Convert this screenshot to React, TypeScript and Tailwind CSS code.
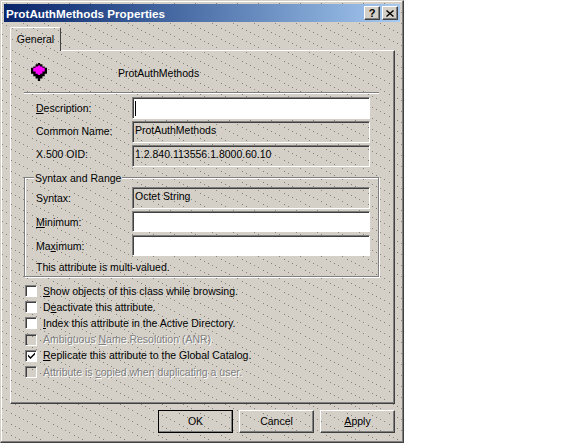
import React from 'react';

// dither: short diagonal runs of single grey pixels, same tile so they line up
const dots = "bg-[#d4d0c8] bg-[radial-gradient(circle,#7f7f78_0.5px,transparent_0.7px),radial-gradient(circle,#85857e_0.5px,transparent_0.7px),radial-gradient(circle,#7f7f78_0.5px,transparent_0.7px),radial-gradient(circle,#8a8a83_0.5px,transparent_0.7px),radial-gradient(circle,#85857e_0.5px,transparent_0.7px)] bg-[length:21px_11px] bg-[position:0_0,4px_2px,8px_4px,12px_6px,16px_8px]";
const raised = "border border-t-white border-l-white border-r-[#404040] border-b-[#404040] shadow-[inset_-1px_-1px_0_#808080]";

const Field = ({ text, white, cursor, h = 'h-[22px]' }: { text?: string; white?: boolean; cursor?: boolean; h?: string }) => (
  <div className={`ml-auto w-[238px] ${h} flex items-center pl-[2px] pb-[3px] border border-t-[#808080] border-l-[#808080] border-r-white border-b-white shadow-[inset_1px_1px_0_#404040] ${white ? 'bg-white' : ''}`}>
    {cursor && <span className="w-px h-[15px] mt-[3px] bg-black" />}
    {text}
  </div>
);

const Check = ({ label, checked, disabled }: { label: React.ReactNode; checked?: boolean; disabled?: boolean }) => (
  <div className={`h-[16.2px] flex items-center gap-[6px] ${disabled ? 'text-[#808080] [text-shadow:1px_1px_0_#fff]' : ''}`}>
    <span className={`w-[12px] h-[12px] shrink-0 flex items-center justify-center border border-t-[#808080] border-l-[#808080] border-r-white border-b-white shadow-[inset_1px_1px_0_#404040] ${disabled ? '' : 'bg-white'}`}>
      {checked && (
        <svg width="9" height="9" viewBox="0 0 9 9">
          <path d="M1 3.5 L3.5 6 L8 1.5 V3.5 L3.5 8 L1 5.5 Z" fill="#000" />
        </svg>
      )}
    </span>
    <span className="whitespace-nowrap">{label}</span>
  </div>
);

const Btn = ({ children, def }: { children: React.ReactNode; def?: boolean }) => (
  <button className={`w-[75px] h-[23px] flex items-center justify-center ${raised} ${def ? 'outline outline-1 -outline-offset-1 outline-black' : ''}`}>
    {children}
  </button>
);

export default function App() {
  return (
    <div className="w-[576px] h-[443px] bg-white overflow-hidden font-['Liberation_Sans',sans-serif] text-[10.5px] leading-[13px] text-black">
      <div className={`w-[404px] h-[443px] flex flex-col p-[3px] ${dots} border border-t-[#d4d0c8] border-l-[#d4d0c8] border-r-[#404040] border-b-[#404040] shadow-[inset_-1px_-1px_0_#808080,inset_1px_1px_0_#fff]`}>
        {/* title bar */}
        <div className="h-[18px] flex items-center pl-[2px] pr-[2px] bg-gradient-to-r from-[#0a246a] to-[#a6caf0]">
          <span className="text-white font-bold text-[11.7px]">ProtAuthMethods Properties</span>
          <div className={`ml-auto w-[16px] h-[14px] flex items-center justify-center bg-[#d4d0c8] font-bold text-[11px] ${raised}`}>?</div>
          <div className={`ml-[2px] w-[16px] h-[14px] flex items-center justify-center bg-[#d4d0c8] ${raised}`}>
            <svg width="8" height="7" viewBox="0 0 8 7"><path d="M0.5 0.5 L7.5 6.5 M7.5 0.5 L0.5 6.5" stroke="#000" strokeWidth="1.4" /></svg>
          </div>
        </div>

        {/* tab */}
        <div className="mt-[5px] ml-[6px] flex h-[24px] relative z-10">
          <div className={`w-[51px] h-[24px] flex items-center justify-center pb-[1px] border border-b-0 border-t-white border-l-white border-r-[#404040] rounded-t-[2px] ${dots}`}>General</div>
        </div>

        {/* sheet */}
        <div className="ml-[6px] w-[385px] h-[354px] -mt-px px-[14px] border border-t-white border-l-white border-r-[#404040] border-b-[#404040] shadow-[inset_-1px_-1px_0_#808080]">
          <div className="h-[41px] flex items-center">
            <svg className="ml-[6px] mt-[1px]" width="16" height="18" viewBox="2 1 14 15" preserveAspectRatio="none">
              <path d="M8 1h2v1h2v2h2v1h2v5h-2v2h-2v2h-2v2H8v-2H6v-2H4v-2H2V5h2V4h2V2h2z" fill="#000" />
              <path d="M9 3h1v1h2v1h2v3h-2v2h-2v1H8v-1H6V8H4V5h2V4h2V3z" fill="#ff00ff" />
            </svg>
            <span className="ml-[71px] mt-[3px]">ProtAuthMethods</span>
          </div>
          <div className="-ml-[1px] h-[2px] w-[355px] border-t border-t-[#808080] border-b border-b-white" />

          <div className="mt-[3px] flex flex-col gap-[2px] w-[345px]">
            <div className="flex items-center pl-[11px]"><span><span className="underline">D</span>escription:</span><Field white cursor /></div>
            <div className="flex items-center pl-[11px]"><span className="pb-[1px]">Common Name:</span><Field text="ProtAuthMethods" /></div>
            <div className="flex items-center pl-[11px]"><span className="pb-[4px]">X.500 OID:</span><Field text="1.2.840.113556.1.8000.60.10" /></div>
          </div>

          {/* group box */}
          <div className="relative mt-[10px] -ml-[1px] w-[355px] h-[100px] border border-[#808080] shadow-[1px_1px_0_#fff,inset_1px_1px_0_#fff] pl-[11px] pr-[8px] pt-[9px]">
            <span className="absolute -top-[6px] left-[9px] px-[1px] bg-[#d4d0c8]">Syntax and Range</span>
            <div className="flex flex-col gap-[2px]">
              <div className="flex items-center"><span>Syntax:</span><Field text="Octet String" /></div>
              <div className="flex items-center"><span className="pt-[2px]"><span className="underline">M</span>inimum:</span><Field white h="h-[21px]" /></div>
              <div className="flex items-center mt-[1px]"><span className="pt-[2px]">Ma<span className="underline">x</span>imum:</span><Field white h="h-[21px]" /></div>
            </div>
            <div className="mt-[5px]">This attribute is multi-valued.</div>
          </div>

          <div className="mt-[6px] flex flex-col">
            <Check label={<><span className="underline">S</span>how objects of this class while browsing.</>} />
            <Check label={<>D<span className="underline">e</span>activate this attribute.</>} />
            <Check label={<><span className="underline">I</span>ndex this attribute in the Active Directory.</>} />
            <Check disabled label={<>Ambiguous <span className="underline">N</span>ame Resolution (ANR)</>} />
            <Check checked label={<><span className="underline">R</span>eplicate this attribute to the Global Catalog.</>} />
            <Check disabled label={<>Attribute is <span className="underline">c</span>opied when duplicating a user.</>} />
          </div>
        </div>

        {/* buttons */}
        <div className="mt-[6px] mr-[5px] flex justify-end gap-[6px]">
          <Btn def>OK</Btn>
          <Btn>Cancel</Btn>
          <Btn><span><span className="underline">A</span>pply</span></Btn>
        </div>
      </div>
    </div>
  );
}
